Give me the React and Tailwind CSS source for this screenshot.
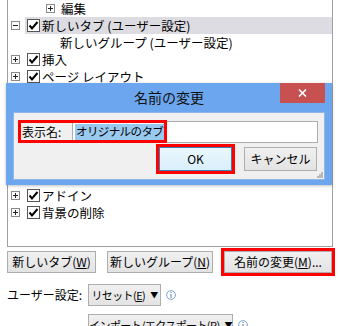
import React from 'react';

const font = "font-['Noto_Sans_CJK_JP','Noto_Sans',sans-serif]";

const Expander = ({ open }) => (
    <svg width="9" height="9" viewBox="0 0 9 9" className="shrink-0">
        <rect x="0.5" y="0.5" width="8" height="8" fill="#fff" stroke="#8a8a8a" />
        <line x1="2" y1="4.5" x2="7" y2="4.5" stroke="#222" />
        {!open && <line x1="4.5" y1="2" x2="4.5" y2="7" stroke="#222" />}
    </svg>
);

const Check = () => (
    <svg width="13" height="13" viewBox="0 0 13 13" className="shrink-0">
        <rect x="0.5" y="0.5" width="12" height="12" fill="#fff" stroke="#555" />
        <path d="M2.5 6.5 L5 9.5 L10.5 3" fill="none" stroke="#000" strokeWidth="2" />
    </svg>
);

const tabs = [
    { label: '挿入' },
    { label: 'ページ レイアウト' },
    { label: '数式' },
    { label: 'データ' },
    { label: '校閲' },
    { label: '表示' },
    { label: '開発' },
    { label: 'ヘルプ' },
    { label: 'アドイン' },
    { label: '背景の削除' },
];

const TabRow = ({ label, open, selected }) => (
    <div className="flex items-center h-[17px]">
        <div className="w-[17px] pl-[3px] flex items-center">
            <Expander open={open} />
        </div>
        <div className={`flex-1 h-full flex items-center pl-[2px] gap-[2px] ${selected ? 'bg-[#dcdce2]' : ''}`}>
            <Check />
            <span className="whitespace-nowrap">{label}</span>
        </div>
    </div>
);

const Btn = ({ children, className = '' }) => (
    <div className={`h-[22px] flex items-center justify-center border border-[#adadad] bg-gradient-to-b from-[#f0f0f0] to-[#e3e3e3] whitespace-nowrap ${className}`}>
        {children}
    </div>
);

const Info = () => (
    <svg width="10" height="10" viewBox="0 0 10 10" className="shrink-0">
        <circle cx="5" cy="5" r="4.4" fill="#fff" stroke="#7f9fcf" />
        <rect x="4.5" y="2" width="1" height="1" fill="#5f82bb" />
        <rect x="4.5" y="4" width="1" height="4" fill="#5f82bb" />
    </svg>
);

const Caret = () => <span className="text-[8px] ml-[5px] leading-none">▼</span>;

export default function App() {
    return (
        <div className={`relative w-[340px] h-[326px] overflow-hidden bg-white text-[12px] text-black ${font}`}>
            {/* ribbon tree */}
            <div className="ml-[7px] w-[326px] h-[248px] border-x border-b border-[#a0a0a0] -mt-px overflow-hidden text-[12.5px] leading-[15px]">
                <div className="flex items-center h-[17px] mt-px">
                    <div className="w-[38px]" />
                    <Expander />
                    <span className="ml-[6px]">編集</span>
                </div>
                <TabRow label="新しいタブ (ユーザー設定)" open selected />
                <div className="flex items-center h-[17px] pl-[52px]">新しいグループ (ユーザー設定)</div>
                {tabs.map((t) => (
                    <TabRow key={t.label} label={t.label} />
                ))}
            </div>

            <div className="flex items-center gap-[11px] mt-[4px] ml-[7px]">
                <Btn className="w-[89px]">新しいタブ(<u>W</u>)</Btn>
                <Btn className="w-[106px]">新しいグループ(<u>N</u>)</Btn>
                <div className="relative">
                    <Btn className="w-[108px]">名前の変更(<u>M</u>)...</Btn>
                    <div className="absolute -inset-[3px] border-[3px] border-[#ff0000]" />
                </div>
            </div>

            <div className="flex items-center mt-[11px] ml-[7px]">
                <span className="w-[81px]">ユーザー設定:</span>
                <Btn className="w-[73px] text-[11px] tracking-[-0.6px]">リセット(<u>E</u>)<Caret /></Btn>
                <span className="ml-[5px]"><Info /></span>
            </div>
            <div className="flex items-center mt-[8px] ml-[88px]">
                <Btn className="w-[145px] text-[11px] tracking-[-0.6px]">インポート/エクスポート(<u>P</u>)<Caret /></Btn>
                <span className="ml-[5px]"><Info /></span>
            </div>

            {/* rename dialog */}
            <div className="absolute left-[6px] top-[83px] w-[326px] h-[102px] bg-[#6ba6ee] shadow-[0_1px_3px_rgba(0,0,0,0.25)] flex flex-col">
                <div className="relative h-[29px] flex items-center justify-center text-[14px] text-[#111]">
                    名前の変更
                    <span className="absolute left-[277px] top-[3px] text-[13px] font-bold text-[#222]">?</span>
                    <div className="absolute right-[7px] top-0 w-[45px] h-[20px] bg-[#c75050] flex items-center justify-center">
                        <svg width="9" height="8" viewBox="0 0 9 8">
                            <path d="M1 0.5 L8 7.5 M8 0.5 L1 7.5" stroke="#fff" strokeWidth="1.6" />
                        </svg>
                    </div>
                </div>
                <div className="relative mx-[7px] h-[68px] bg-[#f0f0f0] border border-[#8fb6e6] flex flex-col pt-[8px] pr-[6px]">
                    <div className="flex items-center h-[22px]">
                        <span className="w-[58px] pl-[8px]">表示名:</span>
                        <div className="flex-1 h-[22px] border border-[#abadb3] bg-white flex items-center pl-[2px]">
                            <span className="bg-[#99c9ef] h-[16px] flex items-center px-[1px] text-[11.5px] tracking-[-0.6px]">オリジナルのタブ</span>
                        </div>
                    </div>
                    <div className="flex justify-end gap-[12px] mt-[4px] pr-[1px]">
                        <div className="relative">
                            <div className="w-[73px] h-[24px] border border-[#3c7fb1] bg-gradient-to-b from-[#eaf6fd] to-[#d9effc] flex items-center justify-center">OK</div>
                            <div className="absolute -inset-[3px] border-[3px] border-[#ff0000]" />
                        </div>
                        <Btn className="w-[73px] h-[24px]">キャンセル</Btn>
                    </div>
                    <svg width="6" height="6" viewBox="0 0 6 6" className="absolute right-[1px] bottom-[1px]">
                        <rect x="4" y="0" width="2" height="2" fill="#b8b8b8" />
                        <rect x="2" y="2" width="2" height="2" fill="#b8b8b8" />
                        <rect x="4" y="2" width="2" height="2" fill="#b8b8b8" />
                        <rect x="0" y="4" width="2" height="2" fill="#b8b8b8" />
                        <rect x="2" y="4" width="2" height="2" fill="#b8b8b8" />
                        <rect x="4" y="4" width="2" height="2" fill="#b8b8b8" />
                    </svg>
                    <div className="absolute left-[4px] top-[7px] w-[149px] h-[23px] border-[3px] border-[#ff0000]" />
                </div>
            </div>
        </div>
    );
}
